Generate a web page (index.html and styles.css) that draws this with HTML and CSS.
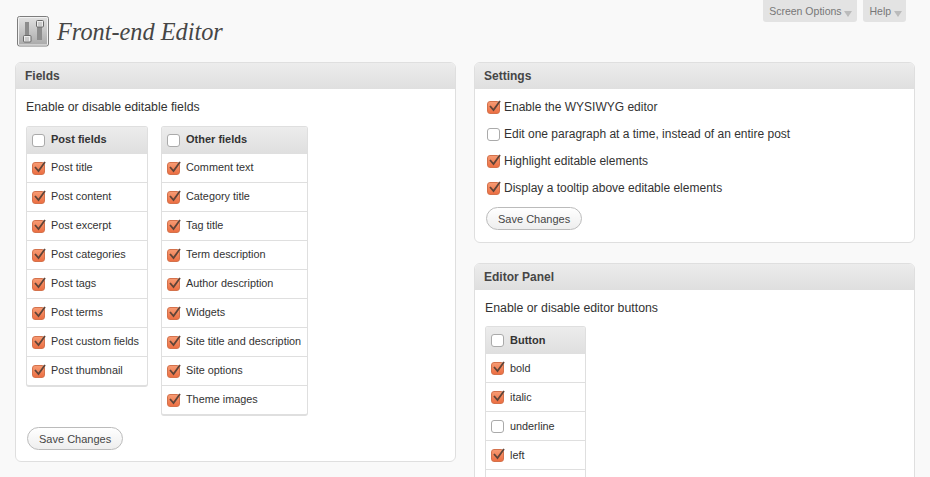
FILE: index.html
```html
<!DOCTYPE html>
<html lang="en">
<head>
  <meta charset="UTF-8">
  <title>Front-end Editor</title>
  <link rel="stylesheet" href="styles.css">
</head>
<body>
  <div class="top">
    <div class="title-wrap">
      <div class="page-icon">
        <svg width="32" height="32" viewBox="0 0 32 32">
          <defs>
            <linearGradient id="iconbg" x1="0" y1="0" x2="0" y2="1">
              <stop offset="0" stop-color="#e2e2e2"/>
              <stop offset="1" stop-color="#a8a8a8"/>
            </linearGradient>
          </defs>
          <rect x="0.5" y="0.5" width="31" height="29.5" rx="2" fill="url(#iconbg)" stroke="#7d7d7d"/>
          <rect x="1.5" y="1.5" width="29" height="27.5" rx="1" fill="none" stroke="#f2f2f2"/>
          <rect x="8" y="6" width="4" height="14" fill="#8c8c8c"/>
          <rect x="20" y="10" width="5" height="14" fill="#8c8c8c"/>
          <rect x="6.5" y="19.5" width="7.5" height="6.5" rx="1" fill="#ececec" stroke="#6a6a6a"/>
          <rect x="19.5" y="4.5" width="7" height="6.5" rx="1" fill="#ececec" stroke="#6a6a6a"/>
          <path d="M8 22h4M8 24h4M21 7h4M21 9h4" stroke="#aaa" fill="none"/>
        </svg>
      </div>
      <h1>Front-end Editor</h1>
    </div>
    <div class="tabs">
      <div class="tab">Screen Options <span class="arrow"></span></div>
      <div class="tab">Help <span class="arrow"></span></div>
    </div>
  </div>

  <div class="columns">
    <div class="col">
      <div class="panel">
        <h3>Fields</h3>
        <div class="inside">
          <p class="intro">Enable or disable editable fields</p>
          <div class="tables">
            <div class="fields w-post">
              <div class="fhead"><span class="box"></span>Post fields</div>
              <div class="row"><span class="box on"><svg viewBox="0 0 14 14"><path d="M3 6l3.5 4L13 1"/></svg></span>Post title</div>
              <div class="row"><span class="box on"><svg viewBox="0 0 14 14"><path d="M3 6l3.5 4L13 1"/></svg></span>Post content</div>
              <div class="row"><span class="box on"><svg viewBox="0 0 14 14"><path d="M3 6l3.5 4L13 1"/></svg></span>Post excerpt</div>
              <div class="row"><span class="box on"><svg viewBox="0 0 14 14"><path d="M3 6l3.5 4L13 1"/></svg></span>Post categories</div>
              <div class="row"><span class="box on"><svg viewBox="0 0 14 14"><path d="M3 6l3.5 4L13 1"/></svg></span>Post tags</div>
              <div class="row"><span class="box on"><svg viewBox="0 0 14 14"><path d="M3 6l3.5 4L13 1"/></svg></span>Post terms</div>
              <div class="row"><span class="box on"><svg viewBox="0 0 14 14"><path d="M3 6l3.5 4L13 1"/></svg></span>Post custom fields</div>
              <div class="row"><span class="box on"><svg viewBox="0 0 14 14"><path d="M3 6l3.5 4L13 1"/></svg></span>Post thumbnail</div>
            </div>
            <div class="fields w-other">
              <div class="fhead"><span class="box"></span>Other fields</div>
              <div class="row"><span class="box on"><svg viewBox="0 0 14 14"><path d="M3 6l3.5 4L13 1"/></svg></span>Comment text</div>
              <div class="row"><span class="box on"><svg viewBox="0 0 14 14"><path d="M3 6l3.5 4L13 1"/></svg></span>Category title</div>
              <div class="row"><span class="box on"><svg viewBox="0 0 14 14"><path d="M3 6l3.5 4L13 1"/></svg></span>Tag title</div>
              <div class="row"><span class="box on"><svg viewBox="0 0 14 14"><path d="M3 6l3.5 4L13 1"/></svg></span>Term description</div>
              <div class="row"><span class="box on"><svg viewBox="0 0 14 14"><path d="M3 6l3.5 4L13 1"/></svg></span>Author description</div>
              <div class="row"><span class="box on"><svg viewBox="0 0 14 14"><path d="M3 6l3.5 4L13 1"/></svg></span>Widgets</div>
              <div class="row"><span class="box on"><svg viewBox="0 0 14 14"><path d="M3 6l3.5 4L13 1"/></svg></span>Site title and description</div>
              <div class="row"><span class="box on"><svg viewBox="0 0 14 14"><path d="M3 6l3.5 4L13 1"/></svg></span>Site options</div>
              <div class="row"><span class="box on"><svg viewBox="0 0 14 14"><path d="M3 6l3.5 4L13 1"/></svg></span>Theme images</div>
            </div>
          </div>
          <button class="save save-fields">Save Changes</button>
        </div>
      </div>
    </div>

    <div class="col">
      <div class="panel">
        <h3>Settings</h3>
        <div class="inside settings">
          <div class="opt"><span class="box on"><svg viewBox="0 0 14 14"><path d="M3 6l3.5 4L13 1"/></svg></span>Enable the WYSIWYG editor</div>
          <div class="opt"><span class="box"></span>Edit one paragraph at a time, instead of an entire post</div>
          <div class="opt"><span class="box on"><svg viewBox="0 0 14 14"><path d="M3 6l3.5 4L13 1"/></svg></span>Highlight editable elements</div>
          <div class="opt"><span class="box on"><svg viewBox="0 0 14 14"><path d="M3 6l3.5 4L13 1"/></svg></span>Display a tooltip above editable elements</div>
          <button class="save save-settings">Save Changes</button>
        </div>
      </div>

      <div class="panel">
        <h3>Editor Panel</h3>
        <div class="inside">
          <p class="intro intro-editor">Enable or disable editor buttons</p>
          <div class="fields w-button">
            <div class="fhead"><span class="box"></span>Button</div>
            <div class="row"><span class="box on"><svg viewBox="0 0 14 14"><path d="M3 6l3.5 4L13 1"/></svg></span>bold</div>
            <div class="row"><span class="box on"><svg viewBox="0 0 14 14"><path d="M3 6l3.5 4L13 1"/></svg></span>italic</div>
            <div class="row"><span class="box"></span>underline</div>
            <div class="row"><span class="box on"><svg viewBox="0 0 14 14"><path d="M3 6l3.5 4L13 1"/></svg></span>left</div>
            <div class="row row-cut"></div>
          </div>
        </div>
      </div>
    </div>
  </div>
</body>
</html>
```

FILE: styles.css
```css
html, body {
  height: 100%;
  overflow: hidden;
}
body {
  margin: 0;
  padding: 0 15px;
  background: #f9f9f9;
  color: #333;
  font-family: "Liberation Sans", Arial, sans-serif;
  font-size: 12px;
}
.top {
  display: flex;
  justify-content: space-between;
  height: 62px;
}
.title-wrap {
  display: flex;
  align-items: flex-start;
  padding: 16px 0 0 2px;
}
.page-icon {
  width: 32px;
  height: 32px;
  margin-right: 8px;
}
h1 {
  margin: 0;
  font-family: "Liberation Serif", "Times New Roman", serif;
  font-size: 24.3px;
  font-style: italic;
  font-weight: normal;
  line-height: 32px;
  color: #464646;
}
.tabs {
  display: flex;
  gap: 6px;
  padding-right: 9px;
  align-self: flex-start;
}
.tab {
  height: 22px;
  line-height: 22px;
  padding: 0 5px 0 6px;
  background: #e3e3e3;
  border-radius: 0 0 3px 3px;
  color: #777;
  font-size: 10.5px;
  white-space: nowrap;
}
.tab:last-child {
  padding-right: 4px;
}
.arrow {
  display: inline-block;
  width: 0;
  height: 0;
  vertical-align: -2px;
  border-left: 4px solid transparent;
  border-right: 4px solid transparent;
  border-top: 6px solid #bbb;
}
.columns {
  display: flex;
  gap: 18px;
}
.col {
  flex: 1;
  min-width: 0;
}
.panel {
  background: #fff;
  border: 1px solid #dfdfdf;
  border-radius: 6px;
  margin-bottom: 20px;
  overflow: hidden;
}
.panel h3 {
  margin: 0;
  height: 26px;
  line-height: 26px;
  padding: 0 9px;
  font-size: 12px;
  font-weight: bold;
  color: #464646;
  background: linear-gradient(to bottom, #ececec, #dfdfdf);
}
.inside {
  padding: 10px 11px 0 10px;
}
.intro {
  margin: 0 0 10px;
  height: 17px;
  line-height: 17px;
  font-size: 12.3px;
}
.intro-editor {
  margin-bottom: 9px;
}
.tables {
  display: flex;
  align-items: flex-start;
  gap: 13px;
}
.fields {
  background: #fff;
  border: 1px solid #dfdfdf;
  border-bottom-width: 2px;
  border-radius: 3px;
  overflow: hidden;
}
.w-post { width: 120px; }
.w-other { width: 145px; }
.w-button { width: 99px; }
.fhead {
  display: flex;
  align-items: center;
  box-sizing: border-box;
  height: 27px;
  padding-bottom: 3px;
  font-weight: bold;
  font-size: 11px;
  color: #333;
  background: linear-gradient(to bottom, #ececec, #dfdfdf);
}
.row {
  display: flex;
  align-items: center;
  box-sizing: border-box;
  height: 29px;
  padding-bottom: 2px;
  border-top: 1px solid #dfdfdf;
  font-size: 10.85px;
  color: #333;
  white-space: nowrap;
}
.fhead:first-child + .row {
  border-top: 0;
  height: 28px;
}
.box {
  position: relative;
  flex: none;
  box-sizing: border-box;
  width: 13px;
  height: 13px;
  margin: 2px 6px 0 5px;
  background: #fff;
  border: 1px solid #aaa;
  border-radius: 3px;
}
.box.on {
  background: linear-gradient(to bottom, #f79a72, #ec6f43);
  border-color: #d4724c;
}
.box svg {
  position: absolute;
  left: -1px;
  top: -2px;
  width: 14px;
  height: 14px;
  overflow: visible;
}
.box svg path {
  fill: none;
  stroke: #5f4438;
  stroke-width: 1.8;
}
.w-button .fhead {
  padding-bottom: 1px;
}
.w-button .row {
  padding-bottom: 0;
}
.w-button .box {
  margin-top: 0;
}
.settings {
  padding-top: 9px;
  padding-bottom: 12px;
}
.opt {
  display: flex;
  align-items: center;
  height: 17px;
  margin-bottom: 10px;
  font-size: 12px;
  white-space: nowrap;
}
.opt .box {
  margin: 2px 4px 0 2px;
}
.save {
  display: block;
  height: 23px;
  padding: 0 11px;
  background: linear-gradient(to bottom, #fff, #eee);
  border: 1px solid #bbb;
  border-radius: 12px;
  color: #464646;
  font-family: inherit;
  font-size: 11px;
}
.save-fields {
  margin: 11px 0 11px 1px;
}
.save-settings {
  margin: 11px 0 0 1px;
}
```
